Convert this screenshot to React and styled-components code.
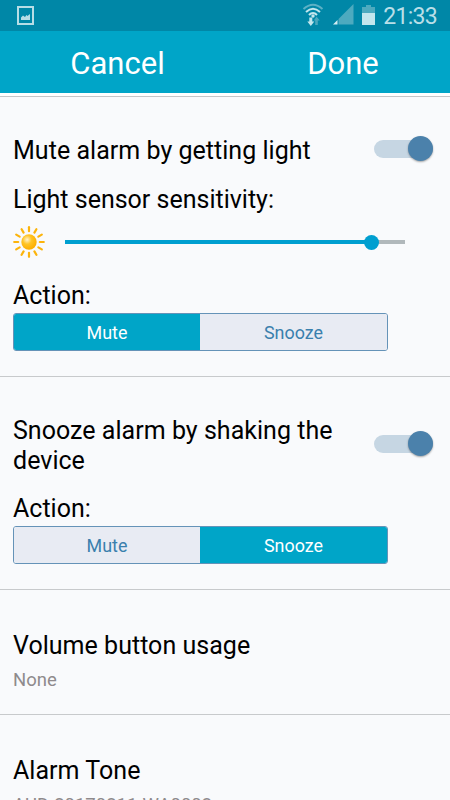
import React, { useState } from 'react';
import styled, { createGlobalStyle } from 'styled-components';

const App = () => {
   const [lightOn, setLightOn] = useState(true);
   const [shakeOn, setShakeOn] = useState(true);
   const [lightAction, setLightAction] = useState('Mute');
   const [shakeAction, setShakeAction] = useState('Snooze');

   return (
      <Screen>
         <GlobalStyle />

         <StatusBar>
            <ImageIcon />
            <StatusRight>
               <WifiIcon />
               <SignalIcon />
               <BatteryIcon />
               <Clock>21:33</Clock>
            </StatusRight>
         </StatusBar>

         <Toolbar>
            <ToolbarButton $shift={10}>Cancel</ToolbarButton>
            <ToolbarButton $shift={11}>Done</ToolbarButton>
         </Toolbar>

         <Section $height={280} $top={39}>
            <Row>
               <Title>Mute alarm by getting light</Title>
               <Toggle on={lightOn} onChange={setLightOn} />
            </Row>
            <Label $top={19}>Light sensor sensitivity:</Label>
            <SliderRow>
               <SunIcon />
               <Slider value={90} />
            </SliderRow>
            <Label $top={23}>Action:</Label>
            <ActionPicker value={lightAction} onChange={setLightAction} />
         </Section>

         <Section $height={213} $top={39}>
            <Row>
               <Title>Snooze alarm by shaking the device</Title>
               <Toggle on={shakeOn} onChange={setShakeOn} />
            </Row>
            <Label $top={18}>Action:</Label>
            <ActionPicker value={shakeAction} onChange={setShakeAction} />
         </Section>

         <Section $height={125} $top={41}>
            <Title>Volume button usage</Title>
            <Value>None</Value>
         </Section>

         <Section $height={125} $top={41}>
            <Title>Alarm Tone</Title>
            <Value>AUD-20170211-WA0003</Value>
         </Section>
      </Screen>
   );
};

const Toggle = ({ on, onChange }) => (
   <Switch role="switch" aria-checked={on} onClick={() => onChange(!on)}>
      <SwitchTrack $on={on}>
         <SwitchKnob $on={on} />
      </SwitchTrack>
   </Switch>
);

const Slider = ({ value }) => (
   <Track>
      <Fill style={{ width: `${value}%` }} />
      <Thumb />
   </Track>
);

const ActionPicker = ({ value, onChange }) => (
   <Segments>
      {['Mute', 'Snooze'].map(name => (
         <Segment
            key={name}
            $active={name === value}
            onClick={() => onChange(name)}
         >
            {name}
         </Segment>
      ))}
   </Segments>
);

const ImageIcon = () => (
   <svg width="17" height="19" viewBox="0 0 17 19">
      <rect x="1" y="1" width="15" height="17" fill="none" stroke="#b7dde6" strokeWidth="2" />
      <path d="M4 14v-2.500l2-2 2 1.500 1.500-2 1 1L13 8v6z" fill="#b7dde6" />
   </svg>
);

const WifiIcon = () => (
   <svg width="22" height="24" viewBox="0 0 22 24">
      <g fill="none" strokeWidth="2">
         <path d="M1.500 7Q11 -1.500 20.500 7" stroke="#5cb1c5" />
         <path d="M4 10Q11 3.500 18 10" stroke="#c3e6ed" />
         <path d="M7 13Q11 9 15 13" stroke="#c3e6ed" />
      </g>
      <circle cx="11" cy="14" r="1.700" fill="#c3e6ed" />
      <path d="M7.300 15.500h3v4h2L8.800 24l-3.500-4.500h2z" fill="#c3e6ed" />
      <path d="M13.200 23h2.600v-4.500h2L14.500 14.500 11.800 18.500h1.400z" fill="#4aa7bd" />
   </svg>
);

const SignalIcon = () => (
   <svg width="21" height="21" viewBox="0 0 21 21">
      <path d="M20.500 0v20.500H5.500V15z" fill="#4daabf" />
      <path d="M4.500 16v4.500H0z" fill="#d5eef3" />
   </svg>
);

const BatteryIcon = () => (
   <svg width="13" height="20" viewBox="0 0 13 20">
      <path d="M4 0h5v2h4v6H0V2h4z" fill="#4daabf" />
      <path d="M0 8h13v12H0z" fill="#c3e6ed" />
   </svg>
);

const SunIcon = () => (
   <svg width="34" height="32" viewBox="-17 -16 34 32">
      <defs>
         <radialGradient id="sun" cx="0.38" cy="0.35" r="0.65">
            <stop offset="0" stopColor="#fff3cf" />
            <stop offset="0.45" stopColor="#ffc425" />
            <stop offset="1" stopColor="#fdae00" />
         </radialGradient>
      </defs>
      <g stroke="#fcb40c" strokeWidth="2.2" strokeLinecap="round">
         {[...Array(12)].map((x, id) => (
            <line
               key={id}
               y1="-10.8"
               y2="-14.8"
               transform={`rotate(${id * 30})`}
            />
         ))}
      </g>
      <circle r="7.700" fill="url(#sun)" />
   </svg>
);

export default App;

const GlobalStyle = createGlobalStyle`
   body {
      margin: 0;
      background: #f9fafc;
   }

   * {
      box-sizing: border-box;
   }

   button {
      margin: 0;
      padding: 0;
      border: 0;
      background: none;
      font: inherit;
      color: inherit;
   }
`;

const Screen = styled.div`
   display: flex;
   flex-direction: column;
   width: 450px;
   height: 800px;
   overflow: hidden;
   background: #f9fafc;
   color: #000;
   font-family: Roboto, sans-serif;
`;

const StatusBar = styled.header`
   display: flex;
   flex: none;
   justify-content: space-between;
   align-items: flex-start;
   height: 31px;
   padding: 6px 13px 0 17px;
   background: #0087a7;
`;

const StatusRight = styled.div`
   display: flex;
   align-items: flex-end;
   height: 19px;

   svg:nth-child(1) {
      margin-right: 9px;
      margin-bottom: -1px;
   }

   svg:nth-child(2) {
      margin-right: 8px;
   }

   svg:nth-child(3) {
      margin-right: 8px;
   }
`;

const Clock = styled.span`
   display: flex;
   align-items: center;
   height: 17px;
   font-size: 23px;
   letter-spacing: -0.7px;
   color: #b9dfe8;
`;

const Toolbar = styled.nav`
   display: grid;
   flex: none;
   grid-template-columns: 1fr 1fr;
   height: 66px;
   border-bottom: 1px solid #c4c6c8;
   background: linear-gradient(#00a5c8 62px, #fff 62px);
`;

const ToolbarButton = styled.button`
   height: 62px;
   padding: 4px 0 0 ${props => props.$shift}px;
   font-size: 31px;
   line-height: 40px;
   color: #fff;
`;

const Section = styled.section`
   flex: none;
   height: ${props => props.$height}px;
   padding: ${props => props.$top}px 16px 0 13px;
   border-bottom: 1px solid #c8cacc;
`;

const Row = styled.div`
   display: flex;
   justify-content: space-between;
   align-items: center;
`;

const Title = styled.h2`
   max-width: 340px;
   margin: 0;
   font-size: 25px;
   font-weight: 400;
   line-height: 30px;
   letter-spacing: 0.03px;
`;

const Label = styled.p`
   margin: ${props => props.$top}px 0 0;
   font-size: 25px;
   line-height: 30px;
`;

const Value = styled.p`
   margin: 7px 0 0;
   font-size: 18.5px;
   line-height: 24px;
   color: #8f8a8c;
`;

const Switch = styled.button`
   flex: none;
   width: 60px;
   height: 25px;
   margin-top: -5px;
   padding-right: 1px;
`;

const SwitchTrack = styled.span`
   display: flex;
   align-items: center;
   justify-content: ${props => (props.$on ? 'flex-end' : 'flex-start')};
   height: 18px;
   border-radius: 9px;
   background: ${props => (props.$on ? '#c6d6e3' : '#c9cccf')};
`;

const SwitchKnob = styled.span`
   flex: none;
   width: 25px;
   height: 25px;
   border-radius: 50%;
   background: ${props => (props.$on ? '#4b81ab' : '#f1f1f1')};
   box-shadow: 0 1px 2px rgba(0, 0, 0, 0.35);
`;

const SliderRow = styled.div`
   display: flex;
   align-items: center;
   gap: 19px;
   height: 32px;
   margin-top: 11px;
   margin-left: -1px;
`;

const Track = styled.div`
   display: flex;
   align-items: center;
   width: 340px;
   height: 4px;
   background: #b1b8bb;
`;

const Fill = styled.div`
   height: 4px;
   background: #009fd0;
`;

const Thumb = styled.div`
   flex: none;
   width: 15px;
   height: 15px;
   margin-left: -7.5px;
   border-radius: 50%;
   background: #009fd0;
`;

const Segments = styled.div`
   display: grid;
   grid-template-columns: 186px 1fr;
   width: 375px;
   height: 38px;
   margin-top: 2px;
   border: 1px solid #6593b8;
   border-radius: 3px;
   overflow: hidden;
`;

const Segment = styled.button`
   padding-top: 2px;
   font-size: 17.9px;
   line-height: 34px;
   background: ${props => (props.$active ? '#00a5c8' : '#e8ebf3')};
   color: ${props => (props.$active ? '#fff' : '#3a80ad')};
`;
